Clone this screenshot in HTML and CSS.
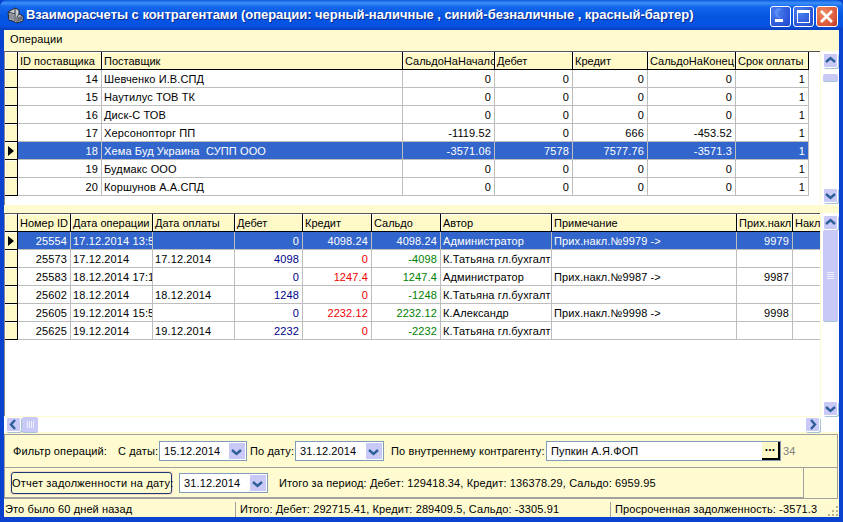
FILE: index.html
```html
<!DOCTYPE html>
<html lang="ru">
<head>
<meta charset="utf-8">
<title>Взаиморасчеты с контрагентами</title>
<link rel="stylesheet" href="styles.css">
</head>
<body>
<div class="window">
  <header class="titlebar">
    <svg class="appicon" width="17" height="18" viewBox="0 0 17 18"><path d="M1 6 L8 2 L12 4 L12 8 L16 10 L16 15 L10 17 L6 15 L2 14 Z" fill="#c9ccd4" stroke="#23262e"/><path d="M8 2 L8 8 L1 6 M8 8 L8 15 M12 8 L10 11 L10 17" fill="none" stroke="#2d3038"/><path d="M2 7 L7 9 L7 14 L2 13 Z" fill="#8c9099"/><path d="M11 11 L15 10 L15 14 L11 16 Z" fill="#6a6e78"/></svg>
    <span class="title">Взаиморасчеты с контрагентами (операции: черный-наличные , синий-безналичные , красный-бартер)</span>
    <div class="winbtns">
      <div class="winbtn"><svg width="21" height="21" viewBox="0 0 21 21"><path d="M8 2 C3 4 4 12 11 12 C6 9 7 5 12 3 Z" fill="#5b8ef5"/><rect x="5" y="13" width="8" height="3" fill="#fff"/></svg></div>
      <div class="winbtn"><svg width="21" height="21" viewBox="0 0 21 21"><rect x="4.5" y="4.5" width="12" height="12" fill="none" stroke="#fff"/><rect x="4" y="4" width="13" height="3" fill="#fff"/></svg></div>
      <div class="winbtn close"><svg width="21" height="21" viewBox="0 0 21 21"><path d="M5 5 L16 16 M16 5 L5 16" stroke="#fff" stroke-width="2.6"/></svg></div>
    </div>
  </header>
  <div class="client">
    <nav class="menu"><span>Операции</span></nav>

    <section class="grid top">
      <div class="tablewrap">
        <table class="t1">
          <colgroup><col class="w13"><col class="w84"><col class="w301"><col class="w92"><col class="w78"><col class="w75"><col class="w88"><col class="w73"></colgroup>
          <thead><tr><th></th><th>ID поставщика</th><th>Поставщик</th><th>СальдоНаНачало</th><th>Дебет</th><th>Кредит</th><th>СальдоНаКонец</th><th>Срок оплаты</th></tr></thead>
          <tbody>
            <tr><th></th><td class="r">14</td><td>Шевченко И.В.СПД</td><td class="r">0</td><td class="r">0</td><td class="r">0</td><td class="r">0</td><td class="r">1</td></tr>
            <tr><th></th><td class="r">15</td><td>Наутилус ТОВ ТК</td><td class="r">0</td><td class="r">0</td><td class="r">0</td><td class="r">0</td><td class="r">1</td></tr>
            <tr><th></th><td class="r">16</td><td>Диск-С ТОВ</td><td class="r">0</td><td class="r">0</td><td class="r">0</td><td class="r">0</td><td class="r">1</td></tr>
            <tr><th></th><td class="r">17</td><td>Херсонопторг ПП</td><td class="r">-1119.52</td><td class="r">0</td><td class="r">666</td><td class="r">-453.52</td><td class="r">1</td></tr>
            <tr class="sel"><th><i class="mark"></i></th><td class="r">18</td><td>Хема Буд Украина  СУПП ООО</td><td class="r">-3571.06</td><td class="r">7578</td><td class="r">7577.76</td><td class="r">-3571.3</td><td class="r">1</td></tr>
            <tr><th></th><td class="r">19</td><td>Будмакс ООО</td><td class="r">0</td><td class="r">0</td><td class="r">0</td><td class="r">0</td><td class="r">1</td></tr>
            <tr><th></th><td class="r">20</td><td>Коршунов А.А.СПД</td><td class="r">0</td><td class="r">0</td><td class="r">0</td><td class="r">0</td><td class="r">1</td></tr>
          </tbody>
        </table>
      </div>
      <div class="vscroll">
        <div class="sbtn"><svg width="13" height="13" viewBox="0 0 13 13"><path d="M2 8 L6.5 4 L11 8" class="arrow"/></svg></div>
        <div class="track short"><div class="thumb small"></div></div>
        <div class="sbtn"><svg width="13" height="13" viewBox="0 0 13 13"><path d="M2 5 L6.5 9 L11 5" class="arrow"/></svg></div>
      </div>
    </section>

    <section class="grid bottom">
      <div class="tablewrap">
        <table class="t2">
          <colgroup><col class="w13"><col class="w53"><col class="w82"><col class="w82"><col class="w68"><col class="w69"><col class="w69"><col class="w111"><col class="w185"><col class="w56"><col class="w60"></colgroup>
          <thead><tr><th></th><th>Номер ID</th><th>Дата операции</th><th>Дата оплаты</th><th>Дебет</th><th>Кредит</th><th>Сальдо</th><th>Автор</th><th>Примечание</th><th>Прих.накл</th><th>Накл</th></tr></thead>
          <tbody>
            <tr class="sel"><th><i class="mark"></i></th><td class="r">25554</td><td>17.12.2014 13:5</td><td></td><td class="r">0</td><td class="r">4098.24</td><td class="r">4098.24</td><td>Администратор</td><td>Прих.накл.№9979 -&gt;</td><td class="r">9979</td><td></td></tr>
            <tr><th></th><td class="r">25573</td><td>17.12.2014</td><td>17.12.2014</td><td class="r deb">4098</td><td class="r cre">0</td><td class="r sal">-4098</td><td>К.Татьяна гл.бухгалт</td><td></td><td></td><td></td></tr>
            <tr><th></th><td class="r">25583</td><td>18.12.2014 17:1</td><td></td><td class="r deb">0</td><td class="r cre">1247.4</td><td class="r sal">1247.4</td><td>Администратор</td><td>Прих.накл.№9987 -&gt;</td><td class="r">9987</td><td></td></tr>
            <tr><th></th><td class="r">25602</td><td>18.12.2014</td><td>18.12.2014</td><td class="r deb">1248</td><td class="r cre">0</td><td class="r sal">-1248</td><td>К.Татьяна гл.бухгалт</td><td></td><td></td><td></td></tr>
            <tr><th></th><td class="r">25605</td><td>19.12.2014 15:5</td><td></td><td class="r deb">0</td><td class="r cre">2232.12</td><td class="r sal">2232.12</td><td>К.Александр</td><td>Прих.накл.№9998 -&gt;</td><td class="r">9998</td><td></td></tr>
            <tr><th></th><td class="r">25625</td><td>19.12.2014</td><td>19.12.2014</td><td class="r deb">2232</td><td class="r cre">0</td><td class="r sal">-2232</td><td>К.Татьяна гл.бухгалт</td><td></td><td></td><td></td></tr>
          </tbody>
        </table>
      </div>
      <div class="vscroll">
        <div class="sbtn"><svg width="13" height="13" viewBox="0 0 13 13"><path d="M2 8 L6.5 4 L11 8" class="arrow"/></svg></div>
        <div class="track"><div class="thumb big"><b></b><b></b><b></b><b></b></div></div>
        <div class="sbtn"><svg width="13" height="13" viewBox="0 0 13 13"><path d="M2 5 L6.5 9 L11 5" class="arrow"/></svg></div>
      </div>
      <div class="hscroll">
        <div class="sbtn"><svg width="13" height="13" viewBox="0 0 13 13"><path d="M8 2 L4 6.5 L8 11" class="arrow"/></svg></div>
        <div class="thumb hthumb"><b></b><b></b><b></b><b></b></div>
        <div class="htrack"></div>
        <div class="sbtn"><svg width="13" height="13" viewBox="0 0 13 13"><path d="M5 2 L9 6.5 L5 11" class="arrow"/></svg></div>
      </div>
    </section>

    <section class="panel">
      <div class="filter">
        <span class="lbl l-filter">Фильтр операций:</span>
        <span class="lbl l-from">С даты:</span>
        <div class="combo c-from"><span>15.12.2014</span><div class="dd"><svg width="13" height="13" viewBox="0 0 13 13"><path d="M2 5 L6.5 9 L11 5" class="arrow"/></svg></div></div>
        <span class="lbl l-to">По дату:</span>
        <div class="combo c-to"><span>31.12.2014</span><div class="dd"><svg width="13" height="13" viewBox="0 0 13 13"><path d="M2 5 L6.5 9 L11 5" class="arrow"/></svg></div></div>
        <span class="lbl l-ctr">По внутреннему контрагенту:</span>
        <div class="combo c-ctr"><span>Пупкин А.Я.ФОП</span><div class="dots">...</div></div>
        <span class="lbl num">34</span>
      </div>
      <div class="report">
        <button class="rbtn" type="button">Отчет задолженности на дату:</button>
        <div class="combo c-rep"><span>31.12.2014</span><div class="dd"><svg width="13" height="13" viewBox="0 0 13 13"><path d="M2 5 L6.5 9 L11 5" class="arrow"/></svg></div></div>
        <span class="lbl l-sum">Итого за период: Дебет: 129418.34, Кредит: 136378.29, Сальдо: 6959.95</span>
      </div>
    </section>

    <footer class="status">
      <div class="s1">Это было 60 дней назад</div>
      <div class="s2">Итого: Дебет: 292715.41, Кредит: 289409.5, Сальдо: -3305.91</div>
      <div class="s3">Просроченная задолженность: -3571.3</div>
      <svg class="grip" width="12" height="12" viewBox="0 0 12 12"><path d="M9 1h2v2H9zM5 5h2v2H5zM9 5h2v2H9zM1 9h2v2H1zM5 9h2v2H5zM9 9h2v2H9z" fill="#b8b48e"/></svg>
    </footer>
  </div>
</div>
</body>
</html>
```
FILE: styles.css
```css
* { box-sizing: border-box; }
html, body { margin: 0; padding: 0; }
body { width: 843px; height: 522px; overflow: hidden; font: 11px/14px "Liberation Sans", Arial, sans-serif; letter-spacing: 0.12px; color: #000; }

.window { width: 843px; height: 522px; display: flex; flex-direction: column; background: #0a42d0; }
.titlebar {
  height: 30px; flex: none; display: flex; align-items: center; padding: 0 5px 0 7px;
  background: linear-gradient(180deg, #0a5ae0 0%, #3d8ff8 10%, #1468ec 22%, #0455e0 55%, #0652e4 85%, #0a3fc0 100%);
  border-radius: 7px 7px 0 0;
}
.appicon { flex: none; margin-right: 2px; }
.title { flex: 1; color: #fff; font: bold 13px/16px "Liberation Sans", sans-serif; letter-spacing: -0.03px; white-space: nowrap; text-shadow: 1px 1px 0 #0a2a90; overflow: hidden; }
.winbtns { display: flex; gap: 2px; flex: none; margin-top: 3px; }
.winbtn { width: 21px; height: 21px; border: 1px solid #fff; border-radius: 3px; background: radial-gradient(circle at 30% 30%, #4d82f0, #2a55d8 70%, #2048c0); overflow: hidden; display: flex; }
.winbtn svg { margin: -1px; flex: none; }
.winbtn.close { width: 22px; background: radial-gradient(circle at 30% 30%, #f08a60, #d8553a 70%, #b83a20); }

.client { flex: 1; margin: 0 4px 5px 4px; background: #fffbd0; display: flex; flex-direction: column; min-height: 0; }
.menu { height: 21px; flex: none; padding: 2px 0 0 6px; }

.grid { display: grid; background: #fff; flex: none; }
.grid.top { height: 154px; margin-bottom: 8px; grid-template-columns: 816px 19px; }
.grid.bottom { height: 219px; grid-template-columns: 816px 19px; grid-template-rows: 203px 16px; }
.tablewrap { overflow: hidden; background: #fff; border-top: 1px solid #555; border-left: 1px solid #888; min-height: 0; }

table { border-collapse: separate; border-spacing: 0; table-layout: fixed; }
.t1 { width: 804px; }
.t2 { width: 848px; }
.w13 { width: 13px; } .w53 { width: 53px; } .w56 { width: 56px; } .w60 { width: 60px; }
.w68 { width: 68px; } .w69 { width: 69px; } .w73 { width: 73px; } .w75 { width: 75px; }
.w78 { width: 78px; } .w82 { width: 82px; } .w84 { width: 84px; } .w88 { width: 88px; }
.w92 { width: 92px; } .w111 { width: 111px; } .w185 { width: 185px; } .w301 { width: 301px; }

th, td { height: 18px; padding: 0 3px 0 2px; white-space: pre; overflow: hidden; font-weight: normal; text-align: left; line-height: 14px; }
th { background: #fff9c8; border-right: 1px solid #000; border-bottom: 1px solid #000; box-shadow: inset 1px 1px 0 #fff; }
thead th { padding-right: 0; letter-spacing: 0; }
td { border-right: 1px solid #bdbdbd; border-bottom: 1px solid #bdbdbd; background: #fff; }
td.r { text-align: right; }
.sel td { background: #3366cc; color: #fff; }
.deb { color: #00008b; } .cre { color: #f00000; } .sal { color: #008000; }
.mark { display: block; width: 0; height: 0; border-left: 6px solid #000; border-top: 5px solid transparent; border-bottom: 5px solid transparent; margin-left: 1px; }

.vscroll { display: flex; flex-direction: column; padding: 2px 3px 2px 2px; border-left: 1px solid #fffbd0; background: #fff; }
.grid.bottom .vscroll { grid-row: 1; grid-column: 2; padding: 2px 2px 0 2px; }
.sbtn { width: 15px; height: 15px; flex: none; background: #c9c9f7; border: 1px solid #fff; border-radius: 2px; box-shadow: 1px 1px 0 #a6c3d6; display: flex; }
.sbtn svg { flex: none; }
.arrow { fill: none; stroke: #2d5f9a; stroke-width: 2.4; }
.track { flex: 1; display: flex; flex-direction: column; min-height: 0; }
.track.short { padding-top: 6px; }
.thumb { background: #c9c9f7; border-radius: 2px; box-shadow: 0 1px 0 #a6c3d6; }
.thumb.small { height: 7px; width: 15px; }
.thumb.big { height: 91px; width: 15px; display: flex; flex-direction: column; align-items: center; justify-content: center; gap: 1px; }
.thumb.big b { display: block; width: 7px; height: 1px; background: #eef; }
.hscroll { grid-row: 2; grid-column: 1; display: flex; align-items: center; padding: 0 0 0 2px; border-top: 1px solid #fffbd0; background: #fff; }
.hthumb { width: 16px; height: 15px; flex: none; display: flex; gap: 1px; justify-content: center; align-items: center; margin-left: 1px; }
.hthumb b { display: block; width: 1px; height: 7px; background: #eef; }
.htrack { flex: 1; }

.panel { margin: 2px 1px 0 0; height: 64px; flex: none; border: 1px solid #a0a0a0; border-bottom: 0; display: flex; flex-direction: column; box-shadow: 0 1px 0 #a0a0a0; }
.filter { height: 33px; flex: none; display: flex; align-items: center; border-bottom: 1px solid #a0a0a0; }
.report { height: 30px; flex: none; display: flex; align-items: center; width: 799px; border-right: 1px solid #a0a0a0; border-bottom: 1px solid #a0a0a0; }
.lbl { white-space: pre; flex: none; }
.l-filter { margin-left: 8px; width: 105px; }
.l-from { width: 41px; }
.l-to { margin-left: 3px; width: 45px; }
.l-ctr { margin-left: 7px; width: 155px; }
.num { color: #808080; margin-left: 2px; }
.combo { height: 20px; flex: none; border: 1px solid #7f9db9; background: #fff; display: flex; align-items: center; padding-left: 4px; white-space: pre; }
.combo span { flex: 1; }
.c-from { width: 88px; } .c-to { width: 89px; } .c-ctr { width: 235px; } .c-rep { width: 89px; margin-left: 7px; }
.dd { width: 16px; height: 16px; background: #c9c9f7; flex: none; margin-right: 1px; padding: 2px 1px; display: flex; }
.dots { width: 18px; height: 18px; background: #fff9c8; border-right: 2px solid #000; border-bottom: 2px solid #000; flex: none; text-align: center; font: bold 12px/10px "Liberation Sans", sans-serif; }
.rbtn { width: 161px; height: 22px; margin: 0 0 0 6px; padding: 0; flex: none; background: #fffbd0; border: 1px solid #1c3a6c; border-radius: 3px; box-shadow: 0 0 0 1px #f4d8c8; font: inherit; letter-spacing: 0.2px; color: #000; white-space: nowrap; }
.l-sum { margin-left: 11px; }

.status { height: 19px; flex: none; display: flex; position: relative; white-space: pre; }
.s1, .s2, .s3 { height: 15px; margin-top: 4px; line-height: 14px; }
.s1 { width: 231px; padding-left: 1px; }
.s2 { width: 375px; padding-left: 4px; border-left: 1px solid #a0a0a0; }
.s3 { flex: 1; padding-left: 4px; border-left: 1px solid #a0a0a0; }
.grip { position: absolute; right: 0; bottom: 0; }
```
